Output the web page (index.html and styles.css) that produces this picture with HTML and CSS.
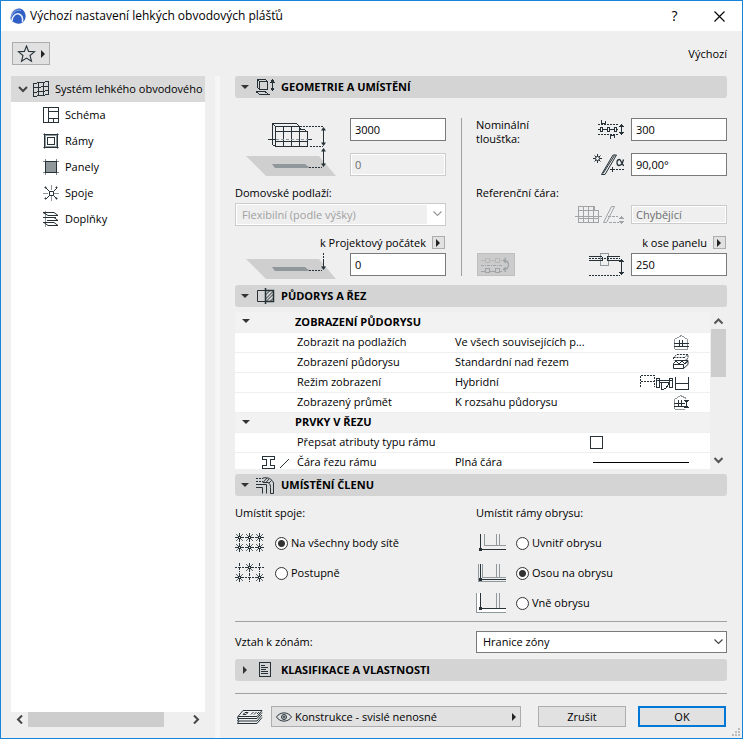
FILE: index.html
```
<!DOCTYPE html>
<html lang="cs">
<head>
  <meta charset="UTF-8">
  <title>Výchozí nastavení lehkých obvodových plášťů</title>
  <link rel="stylesheet" href="styles.css">
</head>
<body>
  <div class="window">
    <header class="titlebar">
      <svg class="logo" width="16" height="16" viewBox="0 0 16 16">
        <circle cx="8" cy="8" r="7.500" fill="#c9cfdb"/>
        <path d="M.5 11C1 4 6 0 10 .5c4 1 6 5 5.500 9-.5 3-2 5-5 6-3 .5-6-.5-8-2z" fill="#2f5fc4"/>
        <path d="M1 9C3 4 7 1 11 2.500" fill="none" stroke="#8fb0f0"/>
        <path d="M2 13c0-5 4-8 7-7s4 4 3.500 8" fill="none" stroke="#e8eefb" stroke-width="1.500"/>
      </svg>
      <h1>Výchozí nastavení lehkých obvodových plášťů</h1>
      <button class="title-btn" aria-label="Nápověda">?</button>
      <button class="title-btn" aria-label="Zavřít">
        <svg width="11" height="11" viewBox="0 0 11 11"><path d="M.5.5l10 10M10.500.5l-10 10" stroke="#000" stroke-width="1.100"/></svg>
      </button>
    </header>

    <div class="toolbar">
      <button class="favorite" aria-label="Oblíbené">
        <svg width="28" height="18" viewBox="0 0 28 18">
          <path d="M9.500 1l2.100 5.400 5.900.4-4.500 3.700 1.500 5.800-5-3.200-5 3.200L6 10.500 1.500 6.800l5.900-.4z" fill="none" stroke="#263238" stroke-width="1.100"/>
          <path d="M24 5v8l4-4z" fill="#222"/>
        </svg>
      </button>
      <span>Výchozí</span>
    </div>

    <div class="content">
      <aside class="sidebar">
        <nav class="tree">
          <a class="tree-root" href="#system">
            <svg width="10" height="7" viewBox="0 0 10 7"><path d="M1 1l4 4 4-4" fill="none" stroke="#444" stroke-width="2"/></svg>
            <svg width="17" height="17" viewBox="0 0 17 17" class="line"><path d="M.5 2.500l15-2v13l-15 2zM5.500 2v13M10.500 1v13M.5 6.500l15-1M.5 11.500l15-2"/></svg>
            <span>Systém lehkého obvodového</span>
          </a>
          <a href="#schema">
            <svg width="16" height="16" viewBox="0 0 16 16" class="line"><path d="M.5.5h15v15H.5zM5.500.5v15M5.500 4.500h10M5.500 11.500h10M10.500 11.500v4"/></svg>
            <span>Schéma</span>
          </a>
          <a href="#ramy">
            <svg width="16" height="16" viewBox="0 0 16 16" class="line"><path d="M1.500 0v16M14.500 0v16M0 1.500h16M0 14.500h16" stroke="#90989c"/><path d="M2.500 1.500h11v13h-11zM1.500 2.500h13v11h-13z" stroke="#90989c"/><path d="M1.500 1.500h13v13h-13zM4.500 4.500h7v7h-7z"/></svg>
            <span>Rámy</span>
          </a>
          <a href="#panely">
            <svg width="16" height="16" viewBox="0 0 16 16" class="line"><path d="M2.500 2.500h11v11h-11z" fill="#90989c"/><path d="M2.500 0v16M13.500 0v16M0 2.500h16M0 13.500h16" stroke="#7b8489"/><path d="M2.500 2.500h11v11h-11z"/></svg>
            <span>Panely</span>
          </a>
          <a href="#spoje">
            <svg width="16" height="16" viewBox="0 0 16 16" class="line soft"><path d="M8.500 0v5M8.500 11v5M0 8.500h5M11 8.500h5" stroke="#90989c"/><path d="M6.500 6.500h4v4h-4zM3 3l3.500 3.500M14 3l-3.500 3.500M3 14l3.500-3.500M14 14l-3.500-3.500"/><path d="M2 2h1v1H2zM13 2h1v1h-1zM2 13h1v1H2zM13 13h1v1h-1z"/></svg>
            <span>Spoje</span>
          </a>
          <a href="#doplnky">
            <svg width="16" height="16" viewBox="0 0 16 16" class="line soft"><path d="M2.500 0v16" stroke="#90989c"/><path d="M0 1.500h11l4 3H5zM0 6.500h13M1 11.500h10l4 3H5zM4 9.500h11M11 6.500l4 3M0 11.500h4"/></svg>
            <span>Doplňky</span>
          </a>
        </nav>
        <div class="hscroll">
          <svg width="7" height="9" viewBox="0 0 7 9"><path d="M6 .5l-4 4 4 4" fill="none" stroke="#444" stroke-width="2"/></svg>
          <div class="hscroll-track"><div class="hscroll-thumb"></div></div>
          <svg width="7" height="9" viewBox="0 0 7 9"><path d="M1 .5l4 4-4 4" fill="none" stroke="#444" stroke-width="2"/></svg>
        </div>
      </aside>

      <div class="splitter"></div>

      <main>
        <button class="section-head">
          <svg width="8" height="5" viewBox="0 0 8 5"><path d="M0 0h8L4 4z" fill="#333"/></svg>
          <svg width="20" height="18" viewBox="0 0 20 18" class="line"><path d="M1.500 1.500h8l2 2v8h-8l-2-2zM3.500 11.500v-8h8M1.500 1.500l2 2"/><path d="M0 13.500h9l4 3H4z"/><path d="M16.500 2v10"/><path d="M14 4.500L16.500 1 19 4.500zM14 9.500l2.500 3.500L19 9.500z" fill="#263238" stroke="none"/></svg>
          <span>GEOMETRIE A UMÍSTĚNÍ</span>
        </button>

        <section class="geometry">
          <div class="geo-left">
            <div class="size-grid">
              <svg class="size-icon" width="92" height="58" viewBox="0 0 92 58">
                <path d="M0 38h73l17 20H20z" fill="#cfcfcf"/>
                <path d="M26 46h33l5 4H29z" fill="#90989c"/>
                <g class="line">
                  <path d="M29.500 8.500l-3-3h24l3 3M26.500 5.500v21l3 2M29.500 8.500v20h32v-14l-3-3h-4l-1-3zM37.500 8.500v20M45.500 8.500v20M53.500 8.500v20M29.500 13.500h32M29.500 23.500h32"/>
                  <path d="M22 21.500h7M62 21.500h4"/>
                  <path d="M30 21.500h32" stroke="#90989c" stroke-dasharray="3 2"/>
                  <path d="M54 8.500h23M64 28.500h13M63 49.500h13" stroke-dasharray="2 1"/>
                  <path d="M77.500 10v17M77.500 31v17"/>
                </g>
                <path d="M75 12.500L77.500 9 80 12.500zM75 24.500l2.500 3.500 2.500-3.500zM75 33.500L77.500 30 80 33.500zM75 45.500l2.500 3.500 2.500-3.500z" fill="#263238"/>
              </svg>
              <input type="text" value="3000" aria-label="Výška">
              <input type="text" value="0" aria-label="Odsazení" disabled>
            </div>
            <label class="caption" for="storey">Domovské podlaží:</label>
            <div class="select disabled">
              <select id="storey" disabled><option>Flexibilní (podle výšky)</option></select>
              <svg width="9" height="6" viewBox="0 0 9 6"><path d="M.5.5l4 4 4-4" fill="none" stroke="#999" stroke-width="1.200"/></svg>
            </div>
            <div class="link-row">
              <label for="origin">k Projektový počátek</label>
              <button class="popup-btn" aria-label="Zvolit počátek"><svg width="5" height="8" viewBox="0 0 5 8"><path d="M0 0v8l4-4z" fill="#222"/></svg></button>
            </div>
            <div class="entry-row">
              <svg class="plane-icon" width="92" height="23" viewBox="0 0 92 23">
                <path d="M0 6h73l17 20H20z" fill="#cfcfcf"/>
                <path d="M26 14h33l5 4H29z" fill="#90989c"/>
                <path d="M63 17.500h13M77.500 0v6" class="line" stroke-dasharray="2 1"/>
                <path d="M77.500 6v8" class="line"/>
                <path d="M75 13.500l2.500 3.500 2.500-3.500z" fill="#263238"/>
              </svg>
              <input type="text" id="origin" value="0">
            </div>
          </div>

          <div class="geo-right">
            <div class="size-grid">
              <label class="thickness" for="thickness">Nominální tloušťka:</label>
              <div class="entry-row">
                <svg width="27" height="20" viewBox="0 0 27 20" class="line"><path d="M0 4.500h21M0 14.500h21" stroke-dasharray="2 1"/><path d="M0 9.500h20"/><path d="M2.500 7.500h2v4h-2zM9.500 7.500h2v4h-2zM16.500 7.500h2v4h-2z" fill="#efefef"/><path d="M3.500 0v3.500h4V1M12.500 19v-3.500h4V18"/><path d="M23.500 5v9"/><path d="M21 7l2.500-3L26 7zM21 12l2.500 3L26 12z" fill="#263238" stroke="none"/></svg>
                <input type="text" id="thickness" value="300">
              </div>
              <div class="entry-row">
                <svg width="32" height="22" viewBox="0 0 32 22" class="line soft"><path d="M4.500 0v9M0 4.500h9M1.500 1.500l6 6M7.500 1.500l-6 6"/><circle cx="4.500" cy="4.500" r="2" fill="#efefef"/><path d="M8.500 20.500L20 1h3.500L12 20.500zM10 19.500L21.500 1.500"/><path d="M17 15.500h14" stroke-dasharray="2 1"/><path d="M19.500 13v5"/><path d="M30.500 5.500c-1 4-3 6-4.500 6s-2-1-2-3 1-3 2.500-3 2.500 6 4.500 6" stroke-width="1.300"/></svg>
                <input type="text" value="90,00°" aria-label="Úhel">
              </div>
            </div>
            <label class="caption" for="refline">Referenční čára:</label>
            <div class="entry-row short">
              <svg width="50" height="19" viewBox="0 0 50 19" class="line gray"><path d="M3.500 1.500h16v4h4v12h-20zM8.500 1.500v16M13.500 1.500v16M18.500 1.500v16M3.500 5.500h20M3.500 13.500h20M0 11.500h27"/><path d="M28.500 17.500l8-16h3l-8 16z" class="soft"/><path d="M33 11.500h10M34 17.500h10" stroke-dasharray="3 1"/><path d="M44 14l2.500-3 2.500 3zM44 16l2.500 3 2.500-3z" fill="#a0a4a6" stroke="none"/></svg>
              <input type="text" id="refline" value="Chybějící" disabled>
            </div>
            <div class="link-row">
              <label for="axis">k ose panelu</label>
              <button class="popup-btn" aria-label="Zvolit osu"><svg width="5" height="8" viewBox="0 0 5 8"><path d="M0 0v8l4-4z" fill="#222"/></svg></button>
            </div>
            <div class="entry-row">
              <button class="flip" aria-label="Překlopit" disabled>
                <svg width="30" height="18" viewBox="0 0 30 18" class="line gray"><path d="M0 4.500h4M9 4.500h5M19 4.500h2M4.500 2.500h4v4h-4zM14.500 2.500h4v4h-4z" stroke="#b8b8b8"/><path d="M0 9.500h22" stroke-dasharray="3 1 1 1"/><path d="M0 15.500h21"/><path d="M4.500 12.500h4v4h-4zM14.500 12.500h4v4h-4z" fill="#ccc"/><path class="soft" d="M23 4.500c6 0 6 9 0 9M25 2l-2.500 2.500L25 7M25 11l-2.500 2.500L25 16" stroke-width="1.300"/></svg>
              </button>
              <svg width="36" height="23" viewBox="0 0 36 23" class="line"><path d="M11.500.5h8v12h-8z" stroke="#90989c"/><path d="M0 3.500h13M0 7.500h13v-4M31 3.500H18M31 7.500H18v-4"/><path d="M0 5.500h31M0 22.500h31" stroke-dasharray="2 1"/><path d="M32.500 7v14"/><path d="M30 9l2.500-3L35 9zM30 19l2.500 3 2.500-3z" fill="#263238" stroke="none"/></svg>
              <input type="text" id="axis" value="250">
            </div>
          </div>
        </section>

        <button class="section-head">
          <svg width="8" height="5" viewBox="0 0 8 5"><path d="M0 0h8L4 4z" fill="#333"/></svg>
          <svg width="20" height="18" viewBox="0 0 20 18" class="line soft"><path d="M9 3.500H1.500v11H9"/><path d="M9.500 3.500h8v11h-8zM9.500 1v3M9.500 14v3" stroke-width="1.500"/><path d="M9.500 8l4-4M9.500 12l8-8M10 14.500l7.500-7.500M14 14.500l3.500-3.500"/></svg>
          <span>PŮDORYS A ŘEZ</span>
        </button>

        <div class="list">
          <div class="list-view">
            <table>
              <colgroup><col class="col-icon"><col class="col-name"><col class="col-value"><col></colgroup>
              <tbody>
                <tr class="group"><td><svg width="8" height="5" viewBox="0 0 8 5"><path d="M0 0h8L4 4z" fill="#333"/></svg></td><th colspan="3">ZOBRAZENÍ PŮDORYSU</th></tr>
                <tr>
                  <td></td><td>Zobrazit na podlažích</td><td>Ve všech souvisejících p...</td>
                  <td class="pict"><svg width="15" height="15" viewBox="0 0 15 15" class="line"><path d="M.5 14V4.500l7-4 6 4V14M1 14.500h13" stroke="#90989c"/><path d="M0 8.500h15M0 11.500h15M5.500 5v7M8.500 5v7"/></svg></td>
                </tr>
                <tr>
                  <td></td><td>Zobrazení půdorysu</td><td>Standardní nad řezem</td>
                  <td class="pict"><svg width="16" height="16" viewBox="0 0 16 16" class="line soft"><path d="M.5 5V3.500L4 .5h11v4l-3.500 2H.5M11 4l4-3.500M.5 3.500H11" stroke-dasharray="2 1"/><path d="M.5 9.500l3-3h11.500v4l-4.500 4H.5zM.5 10.500h10v4M3 7l3 3 3-3 3 3 3-3M10.500 10.500l4.500-4"/></svg></td>
                </tr>
                <tr>
                  <td></td><td>Režim zobrazení</td><td>Hybridní</td>
                  <td class="pict"><svg width="49" height="15" viewBox="0 0 49 15" class="line"><path d="M.5 12V.5h14V12M.5 6.500h14" stroke-dasharray="2 1"/><path d="M16.500 3.500h3v9h-3zM29.500 3.500h3v9h-3zM17 5.500h15M20 7.500h10M21 7.500v7c5 0 7-3 8-7"/><path d="M35.500 2v12h13V2M35.500 8.500h13"/></svg></td>
                </tr>
                <tr>
                  <td></td><td>Zobrazený průmět</td><td>K rozsahu půdorysu</td>
                  <td class="pict"><svg width="15" height="15" viewBox="0 0 15 15" class="line"><path d="M.5 14V4.500l6-4 6 3M1 14.500h10" stroke="#90989c"/><path d="M0 8.500h11M0 11.500h11M4.500 5v7M7.500 5v7"/><path d="M10 5h5l-2.500 4zM10 13h5l-2.500-4z" fill="#263238" stroke="none"/></svg></td>
                </tr>
                <tr class="group"><td><svg width="8" height="5" viewBox="0 0 8 5"><path d="M0 0h8L4 4z" fill="#333"/></svg></td><th colspan="3">PRVKY V ŘEZU</th></tr>
                <tr><td></td><td><label for="override">Přepsat atributy typu rámu</label></td><td class="check" colspan="2"><input type="checkbox" id="override"></td></tr>
                <tr>
                  <td class="frame-cut"><svg width="29" height="13" viewBox="0 0 29 13" class="line"><path d="M.5.5h12v3h-4v6h4v3H.5v-3h4v-6h-4z"/><path d="M18 12l9-9" class="soft"/></svg></td>
                  <td>Čára řezu rámu</td><td>Plná čára</td>
                  <td class="pict"><div class="solid-line"></div></td>
                </tr>
              </tbody>
            </table>
          </div>
          <div class="vscroll">
            <svg width="9" height="7" viewBox="0 0 9 7"><path d="M.5 5.500l4-4 4 4" fill="none" stroke="#555" stroke-width="2"/></svg>
            <div class="vscroll-track"><div class="vscroll-thumb"></div></div>
            <svg width="9" height="7" viewBox="0 0 9 7"><path d="M.5 1l4 4 4-4" fill="none" stroke="#555" stroke-width="2"/></svg>
          </div>
        </div>

        <button class="section-head">
          <svg width="8" height="5" viewBox="0 0 8 5"><path d="M0 0h8L4 4z" fill="#333"/></svg>
          <svg width="20" height="18" viewBox="0 0 20 18" class="line soft"><path d="M0 2.500h7M0 5.500h7" stroke-dasharray="2 1"/><path d="M0 8.500h10.500v9M0 11.500h6.500v6M7 6.500h5c2 1 2.500 3 2.500 5v6M7 2c5-1 9 1 10.500 5v10.500M14.500 17.500h3M7 6.500l4-4.500M10 6.500l3-3.500M13 7l2.500-2.500"/></svg>
          <span>UMÍSTĚNÍ ČLENU</span>
        </button>

        <section class="placement">
          <fieldset>
            <legend>Umístit spoje:</legend>
            <div class="radio-row">
              <svg width="30" height="20" viewBox="0 0 30 20" class="line">
                <defs>
                  <g id="node"><path d="M.5-4v3M.5 2v3M-4 .5h3M2 .5h3"/><path d="M-1 -.5h3M-1 1.500h3M-.5 0v1M1.500 0v1"/><path d="M-3-3h1v1h-1zM3-3h1v1H3zM-3 3h1v1h-1zM3 3h1v1H3zM-2-2h1v1h-1zM2-2h1v1H2zM-2 2h1v1h-1zM2 2h1v1H2z" fill="#5d676c" stroke="none"/></g>
                </defs>
                <path d="M0 4.500h30M0 14.500h30" stroke="#90989c" stroke-dasharray="1 9"/>
                <use href="#node" x="4" y="4"/><use href="#node" x="14" y="4"/><use href="#node" x="24" y="4"/>
                <use href="#node" x="4" y="14"/><use href="#node" x="14" y="14"/><use href="#node" x="24" y="14"/>
              </svg>
              <label><input type="radio" name="joint" checked>Na všechny body sítě</label>
            </div>
            <div class="radio-row">
              <svg width="30" height="20" viewBox="0 0 30 20" class="line">
                <path d="M3 4.500h3M23 4.500h3M13 14.500h3M4.500 0v9M24.500 0v9M14.500 10v9M0 4.500h2M7 4.500h2M20 4.500h2M27 4.500h2M10 14.500h2M17 14.500h2" stroke-dasharray="3 1"/>
                <use href="#node" x="14" y="4"/><use href="#node" x="4" y="14"/><use href="#node" x="24" y="14"/>
              </svg>
              <label><input type="radio" name="joint">Postupně</label>
            </div>
          </fieldset>
          <fieldset>
            <legend>Umístit rámy obrysu:</legend>
            <div class="radio-row">
              <svg width="30" height="20" viewBox="0 0 30 20" class="line"><path d="M8.500 1v11.500H30M20.500 1v11M23.500 1v11" stroke="#90989c"/><path d="M4.500 1v15.500H30"/><path d="M3 15h3v3H3z" fill="#263238" stroke="none"/></svg>
              <label><input type="radio" name="outline">Uvnitř obrysu</label>
            </div>
            <div class="radio-row">
              <svg width="30" height="20" viewBox="0 0 30 20" class="line"><path d="M6.500 1v13.500H30M2.500 1v17.500H30M20.500 1v13M23.500 1v13" stroke="#90989c"/><path d="M4.500 1v15.500H30"/><path d="M3 15h3v3H3z" fill="#263238" stroke="none"/></svg>
              <label><input type="radio" name="outline" checked>Osou na obrysu</label>
            </div>
            <div class="radio-row">
              <svg width="30" height="20" viewBox="0 0 30 20" class="line"><path d="M1 0h29v19H1z" fill="#fff" stroke="none"/><path d="M5 0h25v15H5z" fill="#efefef" stroke="none"/><path d="M.5 0v19.500H30M20.500 0v15M23.500 0v15" stroke="#90989c"/><path d="M4.500 0v15.500H30"/><path d="M3 14h3v3H3z" fill="#263238" stroke="none"/></svg>
              <label><input type="radio" name="outline">Vně obrysu</label>
            </div>
          </fieldset>
        </section>

        <div class="zone-row">
          <label for="zone">Vztah k zónám:</label>
          <div class="select">
            <select id="zone"><option>Hranice zóny</option></select>
            <svg width="9" height="6" viewBox="0 0 9 6"><path d="M.5.5l4 4 4-4" fill="none" stroke="#444" stroke-width="1.200"/></svg>
          </div>
        </div>

        <button class="section-head">
          <svg width="8" height="8" viewBox="0 0 8 8"><path d="M2 0v8l4-4z" fill="#333"/></svg>
          <svg width="20" height="18" viewBox="0 0 20 18" class="line"><path d="M3.500 1.500h11v14h-11z"/><path d="M5 4.500h4M5 6.500h7M5 8.500h5M5 10.500h7M5 12.500h7"/></svg>
          <span>KLASIFIKACE A VLASTNOSTI</span>
        </button>

        <footer>
          <svg width="26" height="16" viewBox="0 0 26 16" class="line soft"><path d="M6 1.500h19l-5 6H1z"/><path d="M1 7.500L.5 9.500H20l5-6M2 9.500l-1.500 2.500H20l5-6M2 12l-1.500 2.500H20l5-6"/><path d="M8 3.500h3l-2 2H6zM14 5.500l2.500-2.500M17 5.500l2.500-2.500M20 5l2-2"/></svg>
          <button class="layer">
            <svg width="16" height="10" viewBox="0 0 16 10" class="line soft"><path d="M.5 5C4-.5 12-.5 15.500 5 12 10.500 4 10.500.5 5z"/><circle cx="8" cy="5" r="2.500"/><circle cx="8" cy="5" r="1"/></svg>
            <span>Konstrukce - svislé nenosné</span>
            <svg width="5" height="8" viewBox="0 0 5 8"><path d="M0 0v8l4-4z" fill="#222"/></svg>
          </button>
          <button class="action">Zrušit</button>
          <button class="action primary">OK</button>
        </footer>
      </main>
    </div>
    <svg class="grip" width="8" height="8" viewBox="0 0 8 8"><path d="M6 0h2v2H6zM3 3h2v2H3zM6 3h2v2H6zM0 6h2v2H0zM3 6h2v2H3zM6 6h2v2H6z" fill="#bdbdbd"/></svg>
  </div>
</body>
</html>
```
FILE: styles.css
```
* {
  box-sizing: border-box;
}
body {
  margin: 0;
  font-family: "Open Sans", "Noto Sans", sans-serif;
  font-size: 11px;
  line-height: 14px;
  color: #000;
}
button, input, select {
  font: inherit;
  color: inherit;
  margin: 0;
  padding: 0;
  border-radius: 0;
}
svg {
  display: block;
  flex: none;
}
.line {
  fill: none;
  stroke: #263238;
  shape-rendering: crispEdges;
}
.soft {
  shape-rendering: auto;
}
.gray {
  stroke: #a0a4a6;
}
.window {
  position: relative;
  display: flex;
  flex-direction: column;
  min-height: 100vh;
  border: 1px solid #1883d7;
  background: #efefef;
}

/* title bar */
.titlebar {
  display: flex;
  align-items: center;
  height: 30px;
  padding-left: 9px;
  background: #fff;
}
.titlebar h1 {
  flex: 1;
  margin: 0 0 0 4px;
  font-size: 12px;
  font-weight: normal;
}
.title-btn {
  display: flex;
  justify-content: center;
  align-items: center;
  width: 45px;
  height: 30px;
  border: none;
  background: none;
  font-size: 14px;
}
.toolbar {
  display: flex;
  justify-content: space-between;
  align-items: center;
  padding: 11px 15px 11px 11px;
}
.favorite {
  display: flex;
  justify-content: center;
  align-items: center;
  width: 38px;
  height: 23px;
  border: 1px solid #adadad;
  background: #e1e1e1;
}

/* left tree */
.content {
  flex: 1;
  display: flex;
}
.sidebar {
  display: flex;
  flex-direction: column;
  width: 194px;
  margin: 0 10px 11px;
}
.tree {
  flex: 1;
  background: #fff;
}
.tree a {
  display: flex;
  align-items: center;
  gap: 6px;
  height: 26px;
  padding-left: 32px;
  color: #000;
  text-decoration: none;
  white-space: nowrap;
}
.tree .tree-root {
  gap: 5px;
  padding-left: 7px;
  background: #d9d9d9;
}
.hscroll {
  display: flex;
  align-items: center;
  height: 15px;
  padding: 0 5px;
}
.hscroll-track {
  flex: 1;
  margin: 0 5px;
}
.hscroll-thumb {
  width: 85%;
  height: 15px;
  background: #cdcdcd;
}
.splitter {
  width: 5px;
  background: #f6f6f6;
}

main {
  flex: 1;
  margin: 0 15px 11px;
}
.section-head {
  display: flex;
  align-items: center;
  width: 100%;
  height: 22px;
  padding: 0 6px;
  border: none;
  border-radius: 3px;
  background: #d4d4d4;
  font-weight: bold;
}
.section-head svg + svg {
  margin: 0 5px 0 7px;
}

/* form controls */
input[type="text"] {
  width: 96px;
  height: 23px;
  padding: 0 4px;
  border: 1px solid #7a7a7a;
  background: #fff;
}
input[type="text"]:disabled {
  border-color: #ccc;
  background: #efefef;
  box-shadow: inset 0 0 0 1px #fff;
  color: #6d6d6d;
}
.select {
  position: relative;
}
.select select {
  display: block;
  width: 100%;
  height: 22px;
  padding: 0 6px;
  border: 1px solid #7a7a7a;
  background: #fff;
  appearance: none;
}
.select svg {
  position: absolute;
  top: 8px;
  right: 4px;
}
.select.disabled select {
  height: 23px;
  border-color: #ccc;
  background: linear-gradient(#efefef, #efefef) 1px 1px / calc(100% - 19px) calc(100% - 2px) no-repeat #fff;
  color: #a0a0a0;
  opacity: 1;
}
.popup-btn {
  display: flex;
  justify-content: center;
  align-items: center;
  width: 13px;
  height: 13px;
  border: 1px solid #adadad;
  background: #e1e1e1;
}

/* geometry */
.geometry {
  display: grid;
  grid-template-columns: 1fr 266px;
  column-gap: 15px;
  padding: 20px 0 9px;
}
.geo-right {
  padding-left: 14px;
  border-left: 1px solid #a0a0a0;
}
.size-grid {
  display: grid;
  grid-template-columns: 1fr auto;
  row-gap: 12px;
}
.size-icon, .thickness {
  grid-row: span 2;
}
.size-icon, .plane-icon {
  margin-left: 11px;
}
.plane-icon {
  overflow: visible;
  margin-right: auto;
}
.thickness {
  width: 64px;
}
.caption {
  display: block;
  margin: 10px 0 3px;
}
.entry-row {
  display: flex;
  justify-content: flex-end;
  align-items: center;
  gap: 6px;
}
.entry-row.short {
  padding: 2px 0;
}
.entry-row.short input {
  height: 19px;
}
.link-row {
  display: flex;
  justify-content: flex-end;
  align-items: center;
  gap: 6px;
  height: 13px;
  margin: 10px 1px 4px 0;
}
.flip {
  display: flex;
  justify-content: center;
  align-items: center;
  width: 38px;
  height: 23px;
  margin: 0 auto 0 1px;
  border: 1px solid #bfbfbf;
  background: #ccc;
}

/* floor plan and section list */
.list {
  display: flex;
  height: 157px;
  margin: 5px 0;
}
.list-view {
  flex: 1;
  overflow: hidden;
}
table {
  width: 100%;
  border-collapse: collapse;
  table-layout: fixed;
  background: #fff;
}
.col-icon {
  width: 60px;
}
.col-name {
  width: 158px;
}
.col-value {
  width: 136px;
}
td, th {
  height: 20px;
  padding: 0 2px;
  border-bottom: 1px solid #efefef;
  text-align: left;
  white-space: nowrap;
}
.group td, .group th {
  padding: 0;
  background: #f2f2f2;
}
.group svg {
  margin-left: 7px;
}
.pict {
  padding-right: 21px;
}
.pict svg {
  margin-left: auto;
}
.check input {
  display: block;
  width: 13px;
  height: 13px;
  margin-left: 135px;
  border: 1px solid #263238;
  background: #fff;
  appearance: none;
}
.frame-cut {
  padding-right: 4px;
}
.frame-cut svg {
  margin-left: auto;
}
.solid-line {
  width: 96px;
  margin-left: auto;
  border-top: 1px solid #000;
}
.vscroll {
  display: flex;
  flex-direction: column;
  align-items: center;
  width: 17px;
  padding: 6px 1px 5px;
}
.vscroll-track {
  flex: 1;
  align-self: stretch;
  margin: 4px 0;
}
.vscroll-thumb {
  height: 48px;
  background: #cdcdcd;
}

/* member placement */
.placement {
  display: grid;
  grid-template-columns: 1fr 251px;
  padding: 10px 0 3px;
  border-bottom: 1px solid #a0a0a0;
}
fieldset {
  min-width: 0;
  margin: 0;
  padding: 0;
  border: none;
}
legend {
  padding: 0;
  margin-bottom: 8px;
}
.radio-row {
  display: flex;
  align-items: center;
  gap: 10px;
  height: 30px;
}
.radio-row label {
  display: flex;
  align-items: center;
  gap: 3px;
}
.radio-row input {
  width: 13px;
  height: 13px;
  border: 1px solid #333;
  border-radius: 50%;
  background: #fff;
  appearance: none;
}
.radio-row input:checked {
  background: radial-gradient(circle, #333 3px, #fff 4px);
}
.zone-row {
  display: grid;
  grid-template-columns: 1fr 251px;
  align-items: center;
  padding: 9px 0 6px;
}

footer {
  display: flex;
  align-items: center;
  margin-top: 12px;
  padding: 12px 1px 0 2px;
  border-top: 1px solid #a0a0a0;
}
.layer {
  flex: 1;
  display: flex;
  align-items: center;
  gap: 3px;
  height: 21px;
  margin: 0 17px 0 8px;
  padding: 0 3px 0 4px;
  border: 1px solid #adadad;
  background: #e1e1e1;
}
.layer span {
  flex: 1;
  text-align: left;
}
.action {
  width: 88px;
  height: 21px;
  border: 1px solid #adadad;
  background: #e1e1e1;
}
.action.primary {
  margin-left: 12px;
  border: 2px solid #0078d7;
}
.grip {
  position: absolute;
  right: 2px;
  bottom: 2px;
}
```
